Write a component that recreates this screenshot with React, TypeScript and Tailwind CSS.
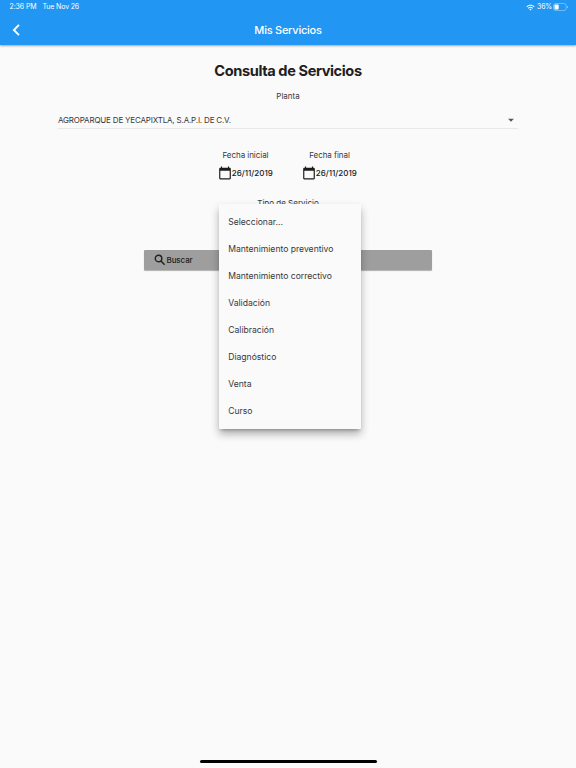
import { MdArrowDropDown, MdWifi } from 'react-icons/md'

const TIPOS = [
  'Seleccionar...',
  'Mantenimiento preventivo',
  'Mantenimiento correctivo',
  'Validación',
  'Calibración',
  'Diagnóstico',
  'Venta',
  'Curso',
]

const FECHAS = [
  { label: 'Fecha inicial', valor: '26/11/2019' },
  { label: 'Fecha final', valor: '26/11/2019' },
]

function IconoCalendario() {
  return (
    <svg viewBox="0 0 24 24" className="h-[14px] w-[14px] flex-shrink-0" fill="#1c1c1c">
      <path d="M20 3h-1V1h-2v2H7V1H5v2H4c-1.1 0-2 .9-2 2v16c0 1.1.9 2 2 2h16c1.1 0 2-.9 2-2V5c0-1.1-.9-2-2-2zm0 18H4V8h16v13z" />
    </svg>
  )
}

function IconoBuscar() {
  return (
    <svg viewBox="0 0 24 24" className="h-[14px] w-[14px] flex-shrink-0" fill="none" stroke="currentColor" strokeWidth="2.4">
      <circle cx="9.5" cy="9.5" r="5.6" />
      <path d="m14 14 6 6" />
    </svg>
  )
}

function BarraEstado() {
  return (
    <div className="flex h-[14px] items-center justify-between pl-[9.5px] pr-[8px] text-[7px] leading-[14px]">
      <div className="flex gap-[6px]">
        <span className="tracking-[-0.1px]">2:36 PM</span>
        <span className="tracking-[-0.15px]">Tue Nov 26</span>
      </div>
      <div className="flex items-center">
        <MdWifi className="mr-[2px] h-[9px] w-[9px]" />
        <span className="tracking-[-0.2px]">36%</span>
        <svg viewBox="0 0 15 8" className="ml-[1px] h-[8px] w-[15px]">
          <rect x=".5" y=".5" width="12.6" height="7" rx="2" fill="none" stroke="white" strokeOpacity=".35" />
          <rect x="1.5" y="1.5" width="4.2" height="5" rx=".8" fill="white" />
          <rect x="14" y="3" width=".8" height="2" fill="white" fillOpacity=".5" />
        </svg>
      </div>
    </div>
  )
}

export default function App() {
  return (
    <div className="flex h-[768px] w-[576px] flex-col overflow-hidden bg-[#fafafa] font-['Inter','Liberation_Sans',sans-serif] text-[#383838]">
      <header className="h-[45px] flex-shrink-0 bg-[#2196f3] text-white shadow-[0_1px_2px_rgba(0,0,0,0.35)]">
        <BarraEstado />
        <div className="grid h-[31px] grid-cols-3 items-center">
          <svg viewBox="0 0 8 12" className="ml-[12px] h-[12px] w-[8px]" fill="none" stroke="white" strokeWidth="1.9">
            <path d="M7 .9 1.9 6 7 11.1" />
          </svg>
          <h1 className="text-center text-[11px] font-medium leading-[16px] tracking-[-0.24px]">Mis Servicios</h1>
        </div>
      </header>

      <main className="flex flex-1 flex-col items-center">
        <h2 className="mt-[16px] text-[14.6px] font-bold leading-[20px] tracking-[-0.4px] text-[#202020]">Consulta de Servicios</h2>
        <p className="mt-[9px] text-[8px] leading-[12px]">Planta</p>

        <div className="mt-[8px] flex h-[19px] w-[460px] items-center justify-between border-b border-[#e8e8e8] pt-[2px] text-[8px]">
          <span className="tracking-[-0.18px]">AGROPARQUE DE YECAPIXTLA, S.A.P.I. DE C.V.</span>
          <MdArrowDropDown className="h-[14px] w-[14px] text-[#555]" />
        </div>

        <div className="mt-[20px] mr-px flex gap-[30px]">
          {FECHAS.map(f => (
            <div key={f.label} className="flex w-[54px] flex-col items-center">
              <p className="whitespace-nowrap text-[8px] leading-[12px] tracking-[-0.05px]">{f.label}</p>
              <div className="mt-[5px] flex h-[14px] items-center text-[8px] font-medium text-[#202020]">
                <IconoCalendario />
                <span className="-ml-[0.5px]">{f.valor}</span>
              </div>
            </div>
          ))}
        </div>

        <div className="relative mt-[17px] flex flex-col items-center">
          <p className="text-[8px] leading-[12px]">Tipo de Servicio</p>
          <ul className="absolute left-1/2 top-[7px] z-10 ml-[-68.8px] w-[142px] rounded-[1px] bg-[#fafafa] py-[4.5px] shadow-[0_3px_3px_-2px_rgba(0,0,0,0.25),0_5px_9px_rgba(0,0,0,0.3)]">
            {TIPOS.map(t => (
              <li key={t} className="flex h-[27px] items-center pl-[9px] text-[8.6px]">{t}</li>
            ))}
          </ul>
        </div>

        <button className="mt-[41px] flex h-[20px] w-[288px] items-center rounded-[1px] bg-[#9e9e9e] pl-[9px] text-[8px] font-medium text-[#202020] shadow-[0_1px_1px_rgba(0,0,0,0.3)]">
          <IconoBuscar />
          <span className="-ml-[0.5px] -mt-px tracking-[-0.1px]">Buscar</span>
        </button>
      </main>

      <div className="mb-[5px] h-[3px] w-[177px] flex-shrink-0 self-center rounded-full bg-black" />
    </div>
  )
}
